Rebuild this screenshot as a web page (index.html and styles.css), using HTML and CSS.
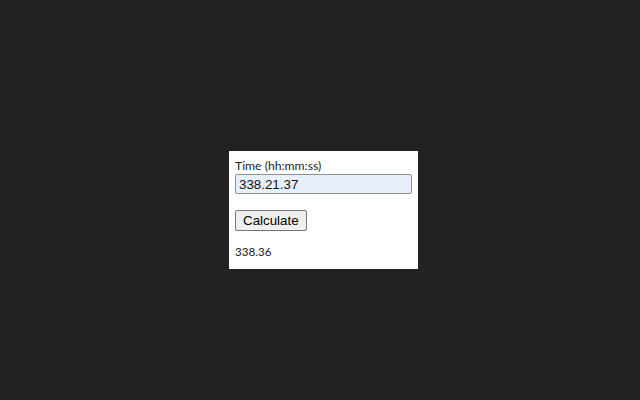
FILE: index.html
```html
<!DOCTYPE html>
<html lang="en">
<head>
<meta charset="utf-8">
<title>Time calculator</title>
<link rel="stylesheet" href="styles.css">
</head>
<body>
<div class="card">
  <label class="label" for="time">Time (hh:mm:ss)</label>
  <input class="field" id="time" type="text" value="338.21.37">
  <button class="btn" type="button">Calculate</button>
  <div class="result">338.36</div>
</div>
</body>
</html>
```

FILE: styles.css
```css
html, body {
  margin: 0;
  padding: 0;
  background: #222222;
}
body {
  height: 400px;
  padding: 151px 0 0 229px;
  box-sizing: border-box;
  font-family: Lato, "Open Sans", sans-serif;
}
.card {
  width: 189px;
  box-sizing: border-box;
  background: #ffffff;
  padding: 6px 6px 9px 6px;
  display: flex;
  flex-direction: column;
  align-items: flex-start;
}
.label {
  font-size: 12.2px;
  line-height: 17px;
  color: #222222;
}
.field {
  width: 177px;
  height: 20px;
  box-sizing: border-box;
  margin: 0;
  padding: 0 3px;
  border: 1px solid #8f8f8f;
  border-radius: 2px;
  background: #e8f0fe;
  color: #111111;
  font-family: "Liberation Sans", Arial, sans-serif;
  font-size: 13.333px;
}
.btn {
  margin: 16px 0 0 0;
  height: 21px;
  box-sizing: border-box;
  padding: 0 7px;
  border: 1px solid #767676;
  border-radius: 2px;
  background: #efefef;
  color: #000000;
  font-family: "Liberation Sans", Arial, sans-serif;
  font-size: 13.333px;
  line-height: 19px;
}
.result {
  margin-top: 13px;
  font-size: 11.6px;
  line-height: 16px;
  color: #222222;
}
```
